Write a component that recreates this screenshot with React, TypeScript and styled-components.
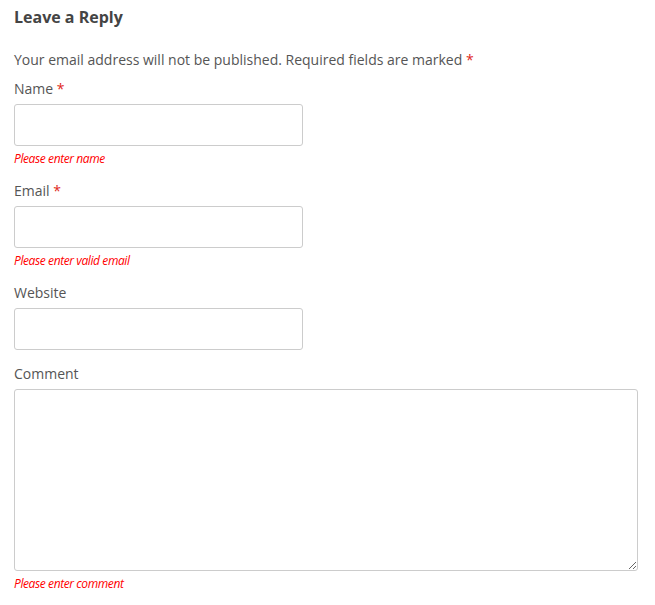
import React from 'react'
import styled, { createGlobalStyle } from 'styled-components'

const Global = createGlobalStyle`
  body { margin: 0; background: #fff; font-family: "Open Sans", sans-serif; color: #555; }
`

const Form = styled.form`
  padding: 5px 17px 0 14px;
`

const Title = styled.h3`
  margin: 0 0 21px;
  font-size: 16px;
  line-height: 24px;
  font-weight: 700;
  color: #444;
`

const Notes = styled.p`
  margin: 0 0 9px;
  font-size: 14px;
  line-height: 20px;
`

const Req = styled.span`
  color: #e0271b;
`

const Field = styled.div`
  margin-bottom: 14px;
  &:last-child { margin-bottom: 0; }
`

const Label = styled.label`
  display: block;
  font-size: 14px;
  line-height: 20px;
  margin-bottom: 5px;
`

const Input = styled.input`
  display: block;
  box-sizing: border-box;
  width: 289px;
  height: 42px;
  border: 1px solid #ccc;
  border-radius: 3px;
  background: #fff;
`

const Area = styled.textarea`
  display: block;
  box-sizing: border-box;
  width: 624px;
  height: 182px;
  border: 1px solid #ccc;
  border-radius: 3px;
`

const Error = styled.div`
  margin-top: 5px;
  font-size: 12px;
  line-height: 16px;
  font-style: italic;
  letter-spacing: -0.4px;
  color: #f00;
`

export default function App() {
  return (
    <>
      <Global />
      <Form>
        <Title>Leave a Reply</Title>
        <Notes>Your email address will not be published. Required fields are marked <Req>*</Req></Notes>
        <Field>
          <Label>Name <Req>*</Req></Label>
          <Input />
          <Error>Please enter name</Error>
        </Field>
        <Field>
          <Label>Email <Req>*</Req></Label>
          <Input />
          <Error>Please enter valid email</Error>
        </Field>
        <Field>
          <Label>Website</Label>
          <Input />
        </Field>
        <Field>
          <Label>Comment</Label>
          <Area />
          <Error>Please enter comment</Error>
        </Field>
      </Form>
    </>
  )
}
